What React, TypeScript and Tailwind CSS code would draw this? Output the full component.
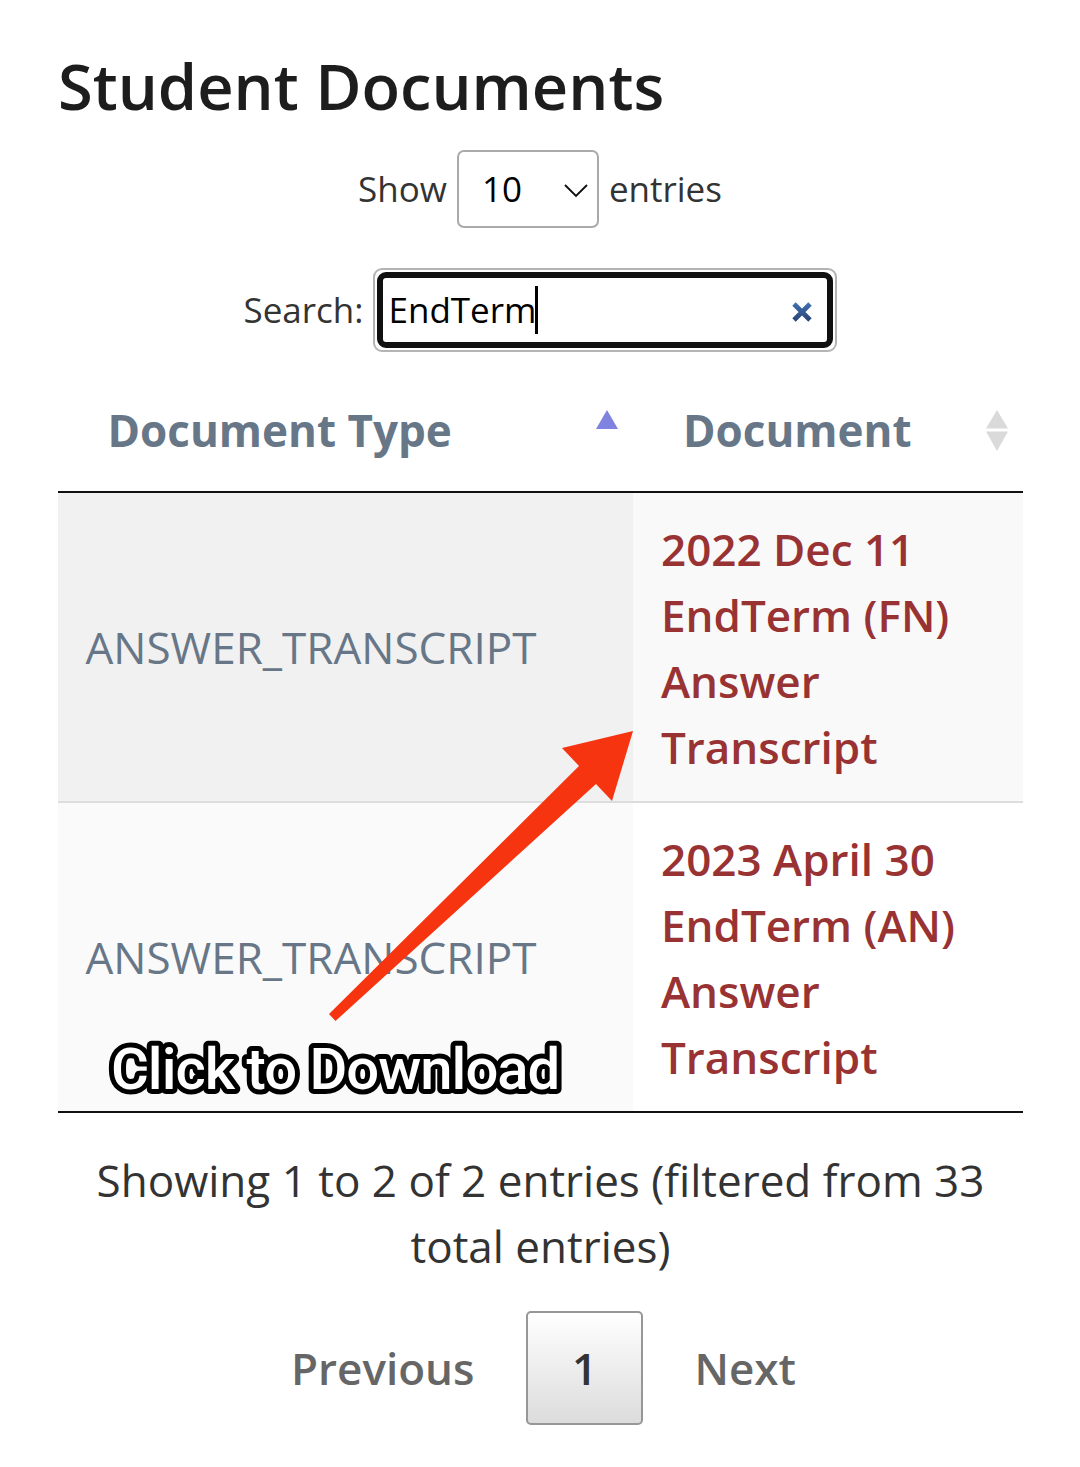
import React from "react";

const rows = [
  { type: "ANSWER_TRANSCRIPT", doc: ["2022 Dec 11", "EndTerm (FN)", "Answer", "Transcript"], a: "bg-[#f1f1f1]", b: "bg-[#f9f9f9]", line: "border-b-2 border-[#dddddd]" },
  { type: "ANSWER_TRANSCRIPT", doc: ["2023 April 30", "EndTerm (AN)", "Answer", "Transcript"], a: "bg-[#fafafa]", b: "bg-white", line: "border-b-2 border-[#111111]" },
];

export default function App() {
  return (
    <main className="relative h-[1467px] w-[1080px] overflow-hidden bg-white px-[58px] pt-[44px] font-['Open_Sans',sans-serif] text-[#333333]">
      <h1 className="h-[84px] text-[63.2px] leading-[83px] font-semibold whitespace-nowrap text-[#1d1d1d]">Student Documents</h1>
      <div className="mt-[22px] flex h-[78px] items-center justify-center gap-[10px] text-[35px]">
        <span className="mt-px">Show</span>
        <div className="flex h-[78px] w-[142px] items-center justify-between rounded-[7px] border-2 border-[#aaaaaa] pt-px pr-[9px] pl-[23px] text-black">
          <span>10</span>
          <svg className="mt-[2px]" width="24" height="16" viewBox="0 0 24 16" fill="none" stroke="#111" strokeWidth="1.9"><path d="M1 2L12 13L23 2" /></svg>
        </div>
        <span className="mt-px">entries</span>
      </div>
      <div className="mt-[40px] flex h-[84px] items-center justify-center gap-[9px] text-[35px]">
        <span className="mt-px">Search:</span>
        <div className="h-[84px] w-[464px] rounded-[9px] border-2 border-[#b4b4b4] p-[2px]">
          <div className="flex h-full items-center rounded-[9px] border-[6px] border-[#101010] pr-[15px] pl-[6px] text-black">
            <span className="mt-px">EndTerm</span>
            <span className="-ml-px h-[48px] w-[3px] bg-black" />
            <svg className="mt-[3px] ml-auto" width="20" height="20" viewBox="0 0 20 20" strokeWidth="4.8">
              <defs>
                <linearGradient id="clear" gradientUnits="userSpaceOnUse" x1="0" y1="0" x2="0" y2="20">
                  <stop offset="0" stopColor="#3f73b5" />
                  <stop offset="1" stopColor="#2a4170" />
                </linearGradient>
              </defs>
              <path d="M2 2L18 18M18 2L2 18" stroke="url(#clear)" />
            </svg>
          </div>
        </div>
      </div>
      <section className="mt-[20px] w-[965px]">
        <div className="flex h-[121px] border-b-2 border-[#111111] text-[44px] font-bold text-[#677788]">
          <div className="flex w-[575px] justify-between pr-[14px] pl-[49.5px]">
            <span className="leading-[117px]">Document Type</span>
            <svg className="mt-[37px]" width="24" height="22" viewBox="0 0 24 22"><path d="M12 1L23 20H1Z" fill="#7f82de" /></svg>
          </div>
          <div className="flex flex-1 justify-between pr-[14px] pl-[50px]">
            <span className="leading-[117px]">Document</span>
            <svg className="mt-[37px]" width="24" height="44" viewBox="0 0 24 44"><path d="M12 1L23 19.500H1ZM12 42L1 22.500H23Z" fill="#dadada" /></svg>
          </div>
        </div>
        {rows.map((r) => (
          <div key={r.doc[0]} className={`flex h-[310px] ${r.line}`}>
            <div className={`flex w-[575px] items-center pl-[27.5px] text-[44px] text-[#677788] ${r.a}`}>{r.type}</div>
            <div className={`flex-1 pt-[23px] pl-[28px] text-[44px] leading-[66px] font-semibold whitespace-nowrap text-[#993333] ${r.b}`}>
              {r.doc.map((t) => <div key={t}>{t}</div>)}
            </div>
          </div>
        ))}
      </section>
      <p className="mt-[34px] pl-px text-center text-[44px] leading-[66px] whitespace-nowrap">Showing 1 to 2 of 2 entries (filtered from 33<br />total entries)</p>
      <nav className="mt-[32px] flex h-[114px] items-center pl-[233px] text-[44px] font-semibold text-[#666666]">
        <span className="w-[235px]">Previous</span>
        <span className="flex h-[114px] w-[117px] items-center justify-center rounded-[5px] border-2 border-[#979797] bg-linear-to-b from-white to-[#dcdcdc] text-[#333333]">1</span>
        <span className="ml-[51.5px]">Next</span>
      </nav>
      <svg className="absolute top-[720px] left-[90px]" width="560" height="400" viewBox="90 720 560 400">
        <path d="M633 731L562 748L579 766L329 1014L335.500 1021L596 784L612 801Z" fill="#f63510" />
        <text y="1089" className="font-[Roboto] text-[58px] font-medium" letterSpacing="-1" fill="#fff" stroke="#000" strokeWidth="10" strokeLinejoin="round" paintOrder="stroke">
          <tspan x="111">Click </tspan>
          <tspan x="246.500">to </tspan>
          <tspan x="309.500">Download</tspan>
        </text>
      </svg>
    </main>
  );
}
